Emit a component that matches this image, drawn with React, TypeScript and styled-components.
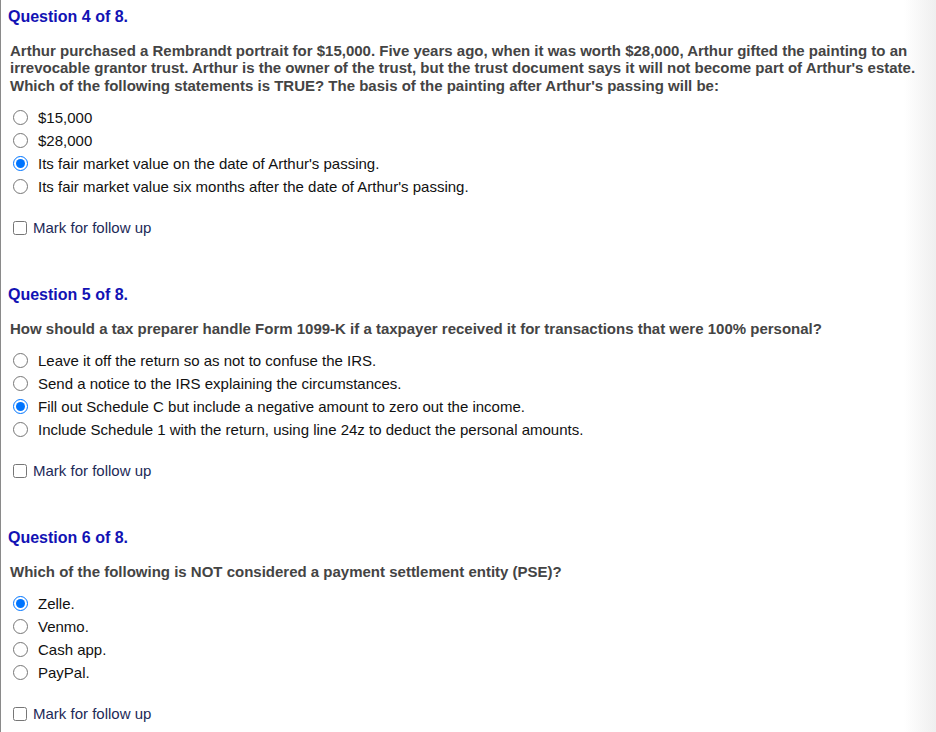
import React from "react";
import styled, { createGlobalStyle } from "styled-components";

const GlobalStyle = createGlobalStyle`
  html, body {
    margin: 0;
    padding: 0;
    background: #ffffff;
  }
  body {
    font-family: "Liberation Sans", Arial, Helvetica, sans-serif;
  }
  * {
    box-sizing: border-box;
  }
`;

const Page = styled.main`
  min-height: 100vh;
  border-left: 1px solid #8a8a8a;
  background: linear-gradient(
    to right,
    #ffffff 0,
    #ffffff calc(100% - 32px),
    #efefef 100%
  );
  padding: 8px 0 20px 0;
`;

const QuestionBlock = styled.section`
  display: flex;
  flex-direction: column;
  & + & {
    margin-top: 49.5px;
  }
`;

const QuestionHeading = styled.h2`
  margin: 0;
  padding-left: 7px;
  font-size: 16px;
  line-height: 18px;
  font-weight: bold;
  color: #1212b4;
`;

const QuestionText = styled.p`
  margin: 15.5px 0 0 0;
  padding-left: 9px;
  font-size: 15px;
  line-height: 17.5px;
  font-weight: bold;
  color: #444444;
  white-space: nowrap;
`;

const OptionList = styled.div`
  margin-top: 12px;
  display: flex;
  flex-direction: column;
`;

const OptionRow = styled.label`
  display: flex;
  align-items: center;
  height: 23px;
  padding-left: 12px;
  cursor: pointer;
`;

const RadioInput = styled.input.attrs({ type: "radio" })`
  width: 15px;
  height: 15px;
  margin: 0 10px 0 0;
  flex: none;
  accent-color: #0075ff;
`;

const OptionText = styled.span`
  font-size: 15px;
  line-height: 18px;
  color: #111111;
`;

const FollowUp = styled.label`
  margin-top: 20.5px;
  display: flex;
  align-items: center;
  height: 18px;
  padding-left: 12px;
  cursor: pointer;
`;

const Checkbox = styled.input.attrs({ type: "checkbox" })`
  width: 14px;
  height: 14px;
  margin: 0 6px 0 0;
  flex: none;
`;

const FollowUpText = styled.span`
  font-size: 15px;
  line-height: 18px;
  color: #1c2a58;
`;

type Question = {
  number: number;
  lines: string[];
  options: string[];
  selected: number;
};

const questions: Question[] = [
  {
    number: 4,
    lines: [
      "Arthur purchased a Rembrandt portrait for $15,000. Five years ago, when it was worth $28,000, Arthur gifted the painting to an",
      "irrevocable grantor trust. Arthur is the owner of the trust, but the trust document says it will not become part of Arthur's estate.",
      "Which of the following statements is TRUE? The basis of the painting after Arthur's passing will be:",
    ],
    options: [
      "$15,000",
      "$28,000",
      "Its fair market value on the date of Arthur's passing.",
      "Its fair market value six months after the date of Arthur's passing.",
    ],
    selected: 2,
  },
  {
    number: 5,
    lines: [
      "How should a tax preparer handle Form 1099-K if a taxpayer received it for transactions that were 100% personal?",
    ],
    options: [
      "Leave it off the return so as not to confuse the IRS.",
      "Send a notice to the IRS explaining the circumstances.",
      "Fill out Schedule C but include a negative amount to zero out the income.",
      "Include Schedule 1 with the return, using line 24z to deduct the personal amounts.",
    ],
    selected: 2,
  },
  {
    number: 6,
    lines: [
      "Which of the following is NOT considered a payment settlement entity (PSE)?",
    ],
    options: ["Zelle.", "Venmo.", "Cash app.", "PayPal."],
    selected: 0,
  },
];

const QuestionCard: React.FC<{ q: Question }> = ({ q }) => (
  <QuestionBlock>
    <QuestionHeading>Question {q.number} of 8.</QuestionHeading>
    <QuestionText>
      {q.lines.map((line, i) => (
        <React.Fragment key={i}>
          {i > 0 && <br />}
          {line}
        </React.Fragment>
      ))}
    </QuestionText>
    <OptionList>
      {q.options.map((opt, i) => (
        <OptionRow key={i}>
          <RadioInput
            name={`q${q.number}`}
            defaultChecked={i === q.selected}
          />
          <OptionText>{opt}</OptionText>
        </OptionRow>
      ))}
    </OptionList>
    <FollowUp>
      <Checkbox />
      <FollowUpText>Mark for follow up</FollowUpText>
    </FollowUp>
  </QuestionBlock>
);

export default function App() {
  return (
    <>
      <GlobalStyle />
      <Page>
        {questions.map((q) => (
          <QuestionCard key={q.number} q={q} />
        ))}
      </Page>
    </>
  );
}
